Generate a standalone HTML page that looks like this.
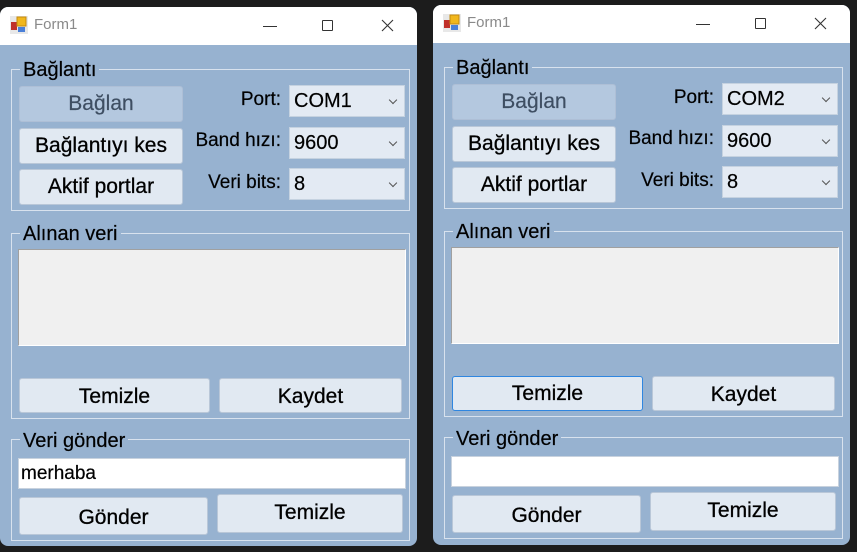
<!DOCTYPE html>
<html><head><meta charset="utf-8"><style>
*{box-sizing:border-box;margin:0;padding:0}
body{width:857px;height:552px;background:#1c1c1c;position:relative;overflow:hidden;font-family:"Liberation Sans",sans-serif;color:#000}
.win{position:absolute;width:417px;height:540px;background:#97b2d0;border-radius:8px;overflow:hidden}
.tb{position:absolute;left:0;top:0;width:417px;height:38px;background:#fff}
.tt{position:absolute;left:34px;top:9px;font-size:15px;color:#8a8a8a}
.a{position:absolute}
.gb{position:absolute;border:1px solid #d8e2ee;}
.gl{position:absolute;background:#97b2d0;font-size:20px;padding:0 3px;line-height:20px;-webkit-text-stroke:0.2px #000}
.btn{position:absolute;background:#e1e9f2;border:1px solid #b9c7d8;border-radius:3px;font-size:21px;text-align:center;-webkit-text-stroke:0.3px #000;white-space:nowrap}
.lbl{position:absolute;font-size:19px;text-align:right;width:120px;-webkit-text-stroke:0.2px #000}
.cb{position:absolute;left:289px;width:116px;height:32px;background:#e3eaf3;border:1px solid #c5d2e0;font-size:20px;padding-left:4px;line-height:30px;-webkit-text-stroke:0.2px #000}
.cb:after{content:"";position:absolute;right:8px;top:11px;width:5px;height:5px;border-right:1px solid #555;border-bottom:1px solid #555;transform:rotate(45deg)}
</style></head><body>

<div class="win" style="left:0;top:7px;height:539px">
 <div class="tb"></div>
 <svg class="a" style="left:10px;top:9px" width="18" height="18"><rect x="0" y="0" width="18" height="18" fill="#e8e8e8"/><rect x="1" y="6" width="6" height="8" fill="#c0302a"/><rect x="7" y="1" width="9" height="9" fill="#f1b71c" stroke="#c48a10"/><rect x="8" y="11" width="7" height="5" fill="#4a7fd8"/></svg>
 <div class="tt">Form1</div>
 <div class="a" style="left:263px;top:19px;width:14px;height:1px;background:#333"></div>
 <div class="a" style="left:322px;top:13px;width:11px;height:11px;border:1px solid #333;border-radius:1px"></div>
 <svg class="a" style="left:381px;top:12px" width="13" height="13"><path d="M1 1L12 12M12 1L1 12" stroke="#333" stroke-width="1.1"/></svg>

 <div class="gb" style="left:11px;top:62px;width:399px;height:142px"></div>
 <div class="gl" style="left:20px;top:53px">Bağlantı</div>
 <div class="btn" style="left:19px;top:79px;width:164px;height:36px;background:#b4c8df;border-color:#aebfd6;color:#3e4e62;-webkit-text-stroke:0.2px #3e4e62;line-height:34px">Bağlan</div>
 <div class="btn" style="left:19px;top:121px;width:164px;height:36px;line-height:34px">Bağlantıyı kes</div>
 <div class="btn" style="left:19px;top:162px;width:164px;height:36px;line-height:34px">Aktif portlar</div>
 <div class="lbl" style="left:161px;top:82px">Port:</div>
 <div class="lbl" style="left:161px;top:123px">Band hızı:</div>
 <div class="lbl" style="left:161px;top:165px">Veri bits:</div>
 <div class="cb" style="top:78px">COM1</div>
 <div class="cb" style="top:120px">9600</div>
 <div class="cb" style="top:161px">8</div>

 <div class="gb" style="left:11px;top:226px;width:399px;height:186px"></div>
 <div class="gl" style="left:20px;top:217px">Alınan veri</div>
 <div class="a" style="left:18px;top:242px;width:388px;height:97px;background:#f0f0f0;border:1px solid #a0a0a0;border-right-color:#fff;border-bottom-color:#fff"></div>
 <div class="btn" style="left:19px;top:371px;width:191px;height:35px;line-height:35px">Temizle</div>
 <div class="btn" style="left:219px;top:371px;width:183px;height:35px;line-height:35px">Kaydet</div>

 <div class="gb" style="left:11px;top:432px;width:399px;height:102px"></div>
 <div class="gl" style="left:20px;top:424px">Veri gönder</div>
 <div class="a" style="left:18px;top:451px;width:388px;height:31px;background:#fff;border:1px solid #c8d2de;font-size:19px;padding-left:2px;line-height:29px;-webkit-text-stroke:0.2px #000">merhaba</div>
 <div class="btn" style="left:19px;top:490px;width:189px;height:38px;line-height:40px">Gönder</div>
 <div class="btn" style="left:217px;top:487px;width:186px;height:39px;line-height:36px">Temizle</div>
</div>

<div class="win" style="left:433px;top:5px">
 <div class="tb"></div>
 <svg class="a" style="left:10px;top:9px" width="18" height="18"><rect x="0" y="0" width="18" height="18" fill="#e8e8e8"/><rect x="1" y="6" width="6" height="8" fill="#c0302a"/><rect x="7" y="1" width="9" height="9" fill="#f1b71c" stroke="#c48a10"/><rect x="8" y="11" width="7" height="5" fill="#4a7fd8"/></svg>
 <div class="tt">Form1</div>
 <div class="a" style="left:263px;top:19px;width:14px;height:1px;background:#333"></div>
 <div class="a" style="left:322px;top:13px;width:11px;height:11px;border:1px solid #333;border-radius:1px"></div>
 <svg class="a" style="left:381px;top:12px" width="13" height="13"><path d="M1 1L12 12M12 1L1 12" stroke="#333" stroke-width="1.1"/></svg>

 <div class="gb" style="left:11px;top:62px;width:399px;height:142px"></div>
 <div class="gl" style="left:20px;top:53px">Bağlantı</div>
 <div class="btn" style="left:19px;top:79px;width:164px;height:36px;background:#b4c8df;border-color:#aebfd6;color:#3e4e62;-webkit-text-stroke:0.2px #3e4e62;line-height:34px">Bağlan</div>
 <div class="btn" style="left:19px;top:121px;width:164px;height:36px;line-height:34px">Bağlantıyı kes</div>
 <div class="btn" style="left:19px;top:162px;width:164px;height:36px;line-height:34px">Aktif portlar</div>
 <div class="lbl" style="left:161px;top:82px">Port:</div>
 <div class="lbl" style="left:161px;top:123px">Band hızı:</div>
 <div class="lbl" style="left:161px;top:165px">Veri bits:</div>
 <div class="cb" style="top:78px">COM2</div>
 <div class="cb" style="top:120px">9600</div>
 <div class="cb" style="top:161px">8</div>

 <div class="gb" style="left:11px;top:226px;width:399px;height:186px"></div>
 <div class="gl" style="left:20px;top:217px">Alınan veri</div>
 <div class="a" style="left:18px;top:242px;width:388px;height:97px;background:#f0f0f0;border:1px solid #a0a0a0;border-right-color:#fff;border-bottom-color:#fff"></div>
 <div class="btn" style="left:19px;top:371px;width:191px;height:35px;line-height:33px;border:1px solid #2f86e0">Temizle</div>
 <div class="btn" style="left:219px;top:371px;width:183px;height:35px;line-height:35px">Kaydet</div>

 <div class="gb" style="left:11px;top:432px;width:399px;height:102px"></div>
 <div class="gl" style="left:20px;top:424px">Veri gönder</div>
 <div class="a" style="left:18px;top:451px;width:388px;height:31px;background:#fff;border:1px solid #c8d2de"></div>
 <div class="btn" style="left:19px;top:490px;width:189px;height:38px;line-height:40px">Gönder</div>
 <div class="btn" style="left:217px;top:487px;width:186px;height:39px;line-height:36px">Temizle</div>
</div>
</body></html>
